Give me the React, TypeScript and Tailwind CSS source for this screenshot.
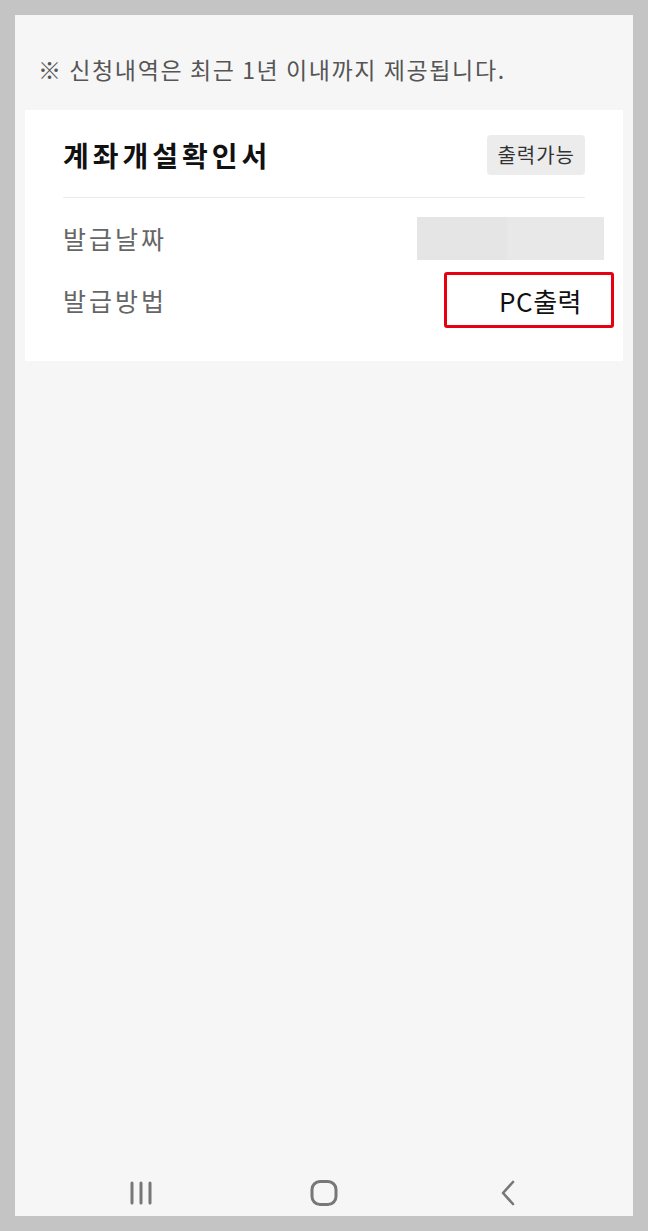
import React from 'react';

const font = { fontFamily: '"Noto Sans CJK KR", "Noto Sans", sans-serif' };

const NavBar: React.FC = () => (
  <div className="h-[46px] flex items-center pl-[114px]">
    <svg width="24" height="24" viewBox="0 0 24 24">
      <g stroke="#777" strokeWidth="3" strokeLinecap="round">
        <line x1="3" y1="2" x2="3" y2="22" />
        <line x1="12" y1="2" x2="12" y2="22" />
        <line x1="21" y1="2" x2="21" y2="22" />
      </g>
    </svg>
    <svg width="28" height="26" viewBox="0 0 28 26" className="ml-[157px]">
      <rect x="2" y="1.5" width="24" height="23" rx="8" fill="none" stroke="#777" strokeWidth="3" />
    </svg>
    <svg width="18" height="26" viewBox="0 0 18 26" className="ml-[161px]">
      <polyline points="14,2 4,13 14,24" fill="none" stroke="#777" strokeWidth="2.6" strokeLinecap="round" strokeLinejoin="round" />
    </svg>
  </div>
);

const App: React.FC = () => {
  return (
    <div className="w-[648px] h-[1231px] bg-[#c4c4c4] p-[15px]" style={font}>
      <div className="h-full bg-[#f6f6f6] flex flex-col">
        {/* 안내 문구 */}
        <p className="pt-[37px] pl-[23px] text-[23px] leading-[34px] tracking-[1.6px] text-[#555]">
          ※ 신청내역은 최근 1년 이내까지 제공됩니다.
        </p>

        {/* 카드 */}
        <div className="mt-[24px] mx-[10px] bg-white pt-[25px] pb-[33px] pl-[38px] pr-[19px]">
          <div className="flex items-center justify-between pr-[19px]">
            <h2 className="text-[28px] leading-[40px] font-bold text-[#111] tracking-[4px]">계좌개설확인서</h2>
            <span className="bg-[#ececec] rounded-[4px] px-[10px] h-[40px] flex items-center text-[20px] tracking-[1px] text-[#333]">
              출력가능
            </span>
          </div>
          <div className="mt-[22px] mr-[19px] border-t border-[#ececec]" />

          <div className="mt-[19px] flex items-center justify-between">
            <span className="text-[25px] leading-[43px] tracking-[3px] text-[#666]">발급날짜</span>
            <div className="flex h-[43px]">
              <div className="w-[90px] bg-[#e5e5e5]" />
              <div className="w-[97px] bg-[#e8e8e8]" />
            </div>
          </div>

          <div className="mt-[12px] flex items-center justify-between">
            <span className="text-[25px] leading-[43px] tracking-[3px] text-[#666]">발급방법</span>
            <div className="w-[170px] h-[56px] border-[3px] border-[#e60012] rounded-[3px] flex items-center justify-end pr-[29px] -mr-[10px]">
              <span className="text-[26px] tracking-[0.5px] text-[#111]">PC출력</span>
            </div>
          </div>
        </div>

        <div className="flex-1" />
        <NavBar />
      </div>
    </div>
  );
};

export default App;
